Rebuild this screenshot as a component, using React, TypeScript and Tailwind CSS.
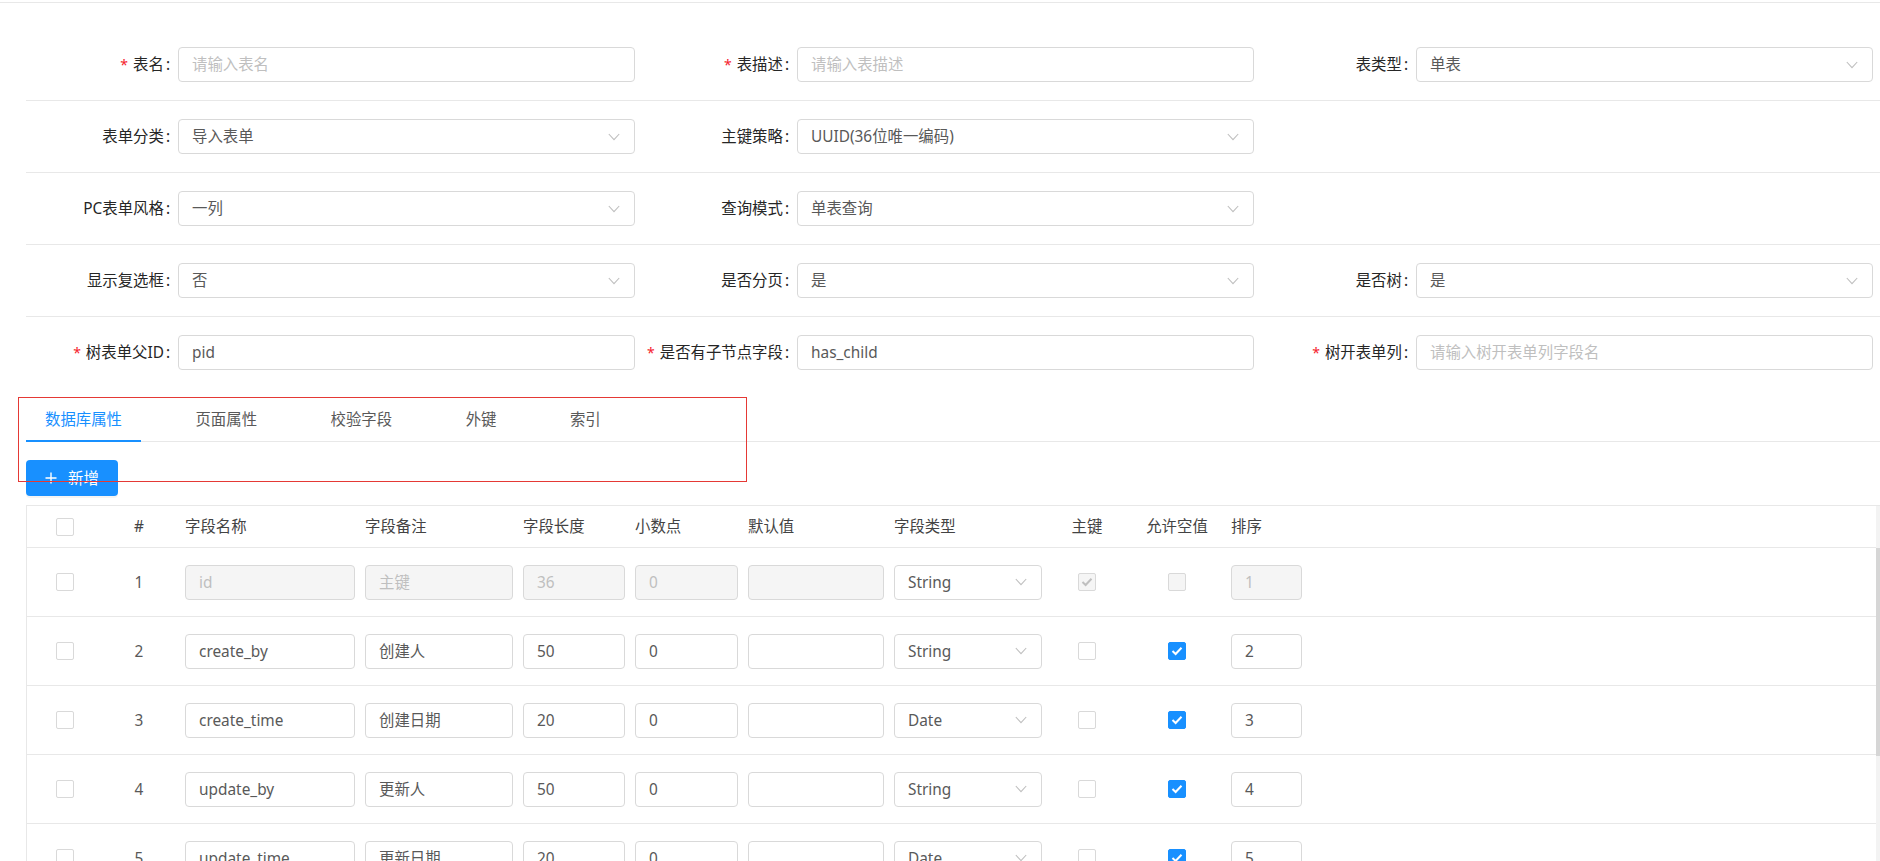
import React from "react";

type FieldDef = {
  label: string;
  required?: boolean;
  value?: string;
  placeholder?: string;
  select?: boolean;
} | null;

const formRows: FieldDef[][] = [
  [
    { label: "表名", required: true, placeholder: "请输入表名" },
    { label: "表描述", required: true, placeholder: "请输入表描述" },
    { label: "表类型", value: "单表", select: true },
  ],
  [
    { label: "表单分类", value: "导入表单", select: true },
    { label: "主键策略", value: "UUID(36位唯一编码)", select: true },
    null,
  ],
  [
    { label: "PC表单风格", value: "一列", select: true },
    { label: "查询模式", value: "单表查询", select: true },
    null,
  ],
  [
    { label: "显示复选框", value: "否", select: true },
    { label: "是否分页", value: "是", select: true },
    { label: "是否树", value: "是", select: true },
  ],
  [
    { label: "树表单父ID", required: true, value: "pid" },
    { label: "是否有子节点字段", required: true, value: "has_child" },
    { label: "树开表单列", required: true, placeholder: "请输入树开表单列字段名" },
  ],
];

const tabs = ["数据库属性", "页面属性", "校验字段", "外键", "索引"];

const fields = [
  { name: "id", note: "主键", len: "36", point: "0", def: "", type: "String", pk: true, nullable: false, order: "1", locked: true },
  { name: "create_by", note: "创建人", len: "50", point: "0", def: "", type: "String", pk: false, nullable: true, order: "2" },
  { name: "create_time", note: "创建日期", len: "20", point: "0", def: "", type: "Date", pk: false, nullable: true, order: "3" },
  { name: "update_by", note: "更新人", len: "50", point: "0", def: "", type: "String", pk: false, nullable: true, order: "4" },
  { name: "update_time", note: "更新日期", len: "20", point: "0", def: "", type: "Date", pk: false, nullable: true, order: "5" },
  { name: "sys_org_code", note: "所属部门", len: "64", point: "0", def: "", type: "String", pk: false, nullable: true, order: "6" },
];

function Chevron() {
  return (
    <svg width="12" height="8" viewBox="0 0 12 8" fill="none" className="shrink-0">
      <path d="M0.8 1L6 6.6L11.2 1" stroke="#bfbfbf" strokeWidth="1.1" />
    </svg>
  );
}

function Checkbox({ checked = false, disabled = false }: { checked?: boolean; disabled?: boolean }) {
  const cls = checked && !disabled
    ? "bg-[#1890ff] border-[#1890ff]"
    : disabled
    ? "bg-[#f5f5f5] border-[#d9d9d9]"
    : "bg-white border-[#d9d9d9]";
  return (
    <div className={`w-[18px] h-[18px] rounded-[2px] border flex items-center justify-center ${cls}`}>
      {checked && (
        <svg width="12" height="10" viewBox="0 0 12 10" fill="none">
          <path d="M1.5 5L4.6 8L10.5 1.8" stroke={disabled ? "#bfbfbf" : "#ffffff"} strokeWidth="2" />
        </svg>
      )}
    </div>
  );
}

function FormItem({ field, labelW }: { field: FieldDef; labelW: string }) {
  if (!field) return <div className={`${labelW} shrink-0`} />;
  return (
    <>
      <div className={`${labelW} shrink-0 flex items-center justify-end pr-[8px] text-[#262626] whitespace-nowrap`}>
        {field.required && <span className="text-[#f5222d] mr-[5px] text-[14px]">*</span>}
        {field.label}
        <span className="ml-[2px]">:</span>
      </div>
      <div className="w-[457px] h-[35px] shrink-0 border border-[#d9d9d9] rounded-[4px] bg-white flex items-center justify-between pl-[13px] pr-[14px]">
        {field.value ? (
          <span className="text-[#595959]">{field.value}</span>
        ) : (
          <span className="text-[#bfbfbf]">{field.placeholder}</span>
        )}
        {field.select && <Chevron />}
      </div>
    </>
  );
}

function Box({ w, value, disabled, select }: { w: string; value: string; disabled?: boolean; select?: boolean }) {
  return (
    <div
      className={`${w} h-[35px] shrink-0 border border-[#d9d9d9] rounded-[4px] flex items-center justify-between pl-[13px] pr-[14px] ${
        disabled ? "bg-[#f5f5f5] text-[#bfbfbf]" : "bg-white text-[#595959]"
      }`}
    >
      <span>{value}</span>
      {select && <Chevron />}
    </div>
  );
}

export default function App() {
  return (
    <div className="relative w-[1880px] h-[861px] overflow-hidden bg-white font-['Noto_Sans','Noto_Sans_CJK_SC',sans-serif] text-[15.4px] leading-[23px]">
      <div className="mt-[2px] border-t border-[#e8e8e8]" />

      {/* form */}
      <div className="pt-[26px]">
        {formRows.map((row, i) => (
          <div
            key={i}
            className={`ml-[26px] h-[72px] flex items-center border-b ${
              i === formRows.length - 1 ? "border-transparent" : "border-[#e8e8e8]"
            }`}
          >
            <FormItem field={row[0]} labelW="w-[152px]" />
            {row[1] ? <FormItem field={row[1]} labelW="w-[162px]" /> : null}
            {row[2] ? <FormItem field={row[2]} labelW="w-[162px]" /> : null}
          </div>
        ))}
      </div>

      {/* tabs */}
      <div className="ml-[26px] h-[53px] pt-[8px] flex border-b border-[#e8e8e8]">
        {tabs.map((t, i) => (
          <div
            key={t}
            className={`relative h-full flex items-center px-[19px] ${i > 0 ? "ml-[35.5px]" : ""} ${
              i === 0 ? "text-[#1890ff]" : "text-[#595959]"
            }`}
          >
            {t}
            {i === 0 && <div className="absolute left-0 right-0 -bottom-[1px] h-[2px] bg-[#1890ff]" />}
          </div>
        ))}
      </div>

      <button className="ml-[26px] mt-[18px] w-[92px] h-[36px] rounded-[4px] bg-[#1890ff] text-white flex items-center justify-center gap-[11px] shadow-[0_2px_0_rgba(0,0,0,0.045)]">
        <svg width="12" height="12" viewBox="0 0 12 12" fill="none">
          <path d="M6 0.5V11.5M0.5 6H11.5" stroke="#ffffff" strokeWidth="1.4" />
        </svg>
        <span>新增</span>
      </button>

      {/* table */}
      <div className="ml-[26px] mt-[9px] flex border-t border-l border-[#e8e8e8]">
        <div className="flex-1">
          <div className="h-[42px] flex items-center border-b border-[#e8e8e8] text-[#434343]">
            <div className="w-[76px] flex justify-center">
              <Checkbox />
            </div>
            <div className="w-[72px] text-center">#</div>
            <div className="ml-[10px] w-[170px]">字段名称</div>
            <div className="ml-[10px] w-[148px]">字段备注</div>
            <div className="ml-[10px] w-[102px]">字段长度</div>
            <div className="ml-[10px] w-[103px]">小数点</div>
            <div className="ml-[10px] w-[136px]">默认值</div>
            <div className="ml-[10px] w-[148px]">字段类型</div>
            <div className="w-[90px] text-center">主键</div>
            <div className="w-[90px] text-center">允许空值</div>
            <div className="ml-[9px] w-[71px]">排序</div>
          </div>
          {fields.map((f, i) => (
            <div key={f.name} className="h-[69px] flex items-center border-b border-[#e8e8e8]">
              <div className="w-[76px] flex justify-center">
                <Checkbox />
              </div>
              <div className="w-[72px] text-center text-[#595959]">{i + 1}</div>
              <div className="ml-[10px]"><Box w="w-[170px]" value={f.name} disabled={f.locked} /></div>
              <div className="ml-[10px]"><Box w="w-[148px]" value={f.note} disabled={f.locked} /></div>
              <div className="ml-[10px]"><Box w="w-[102px]" value={f.len} disabled={f.locked} /></div>
              <div className="ml-[10px]"><Box w="w-[103px]" value={f.point} disabled={f.locked} /></div>
              <div className="ml-[10px]"><Box w="w-[136px]" value={f.def} disabled={f.locked} /></div>
              <div className="ml-[10px]"><Box w="w-[148px]" value={f.type} select /></div>
              <div className="w-[90px] flex justify-center">
                <Checkbox checked={f.pk} disabled={f.locked} />
              </div>
              <div className="w-[90px] flex justify-center">
                <Checkbox checked={f.nullable} disabled={f.locked} />
              </div>
              <div className="ml-[9px]"><Box w="w-[71px]" value={f.order} disabled={f.locked} /></div>
            </div>
          ))}
        </div>
        {/* scrollbar */}
        <div className="w-[4px] flex flex-col">
          <div className="h-[42px] bg-[#f3f3f3]" />
          <div className="h-[208px] bg-[#d6d6d6]" />
          <div className="flex-1 bg-[#f3f3f3]" />
        </div>
      </div>

      {/* red annotation frame */}
      <div className="absolute left-[18px] top-[397px] w-[729px] h-[85px] border border-[#e53935] pointer-events-none" />
    </div>
  );
}
